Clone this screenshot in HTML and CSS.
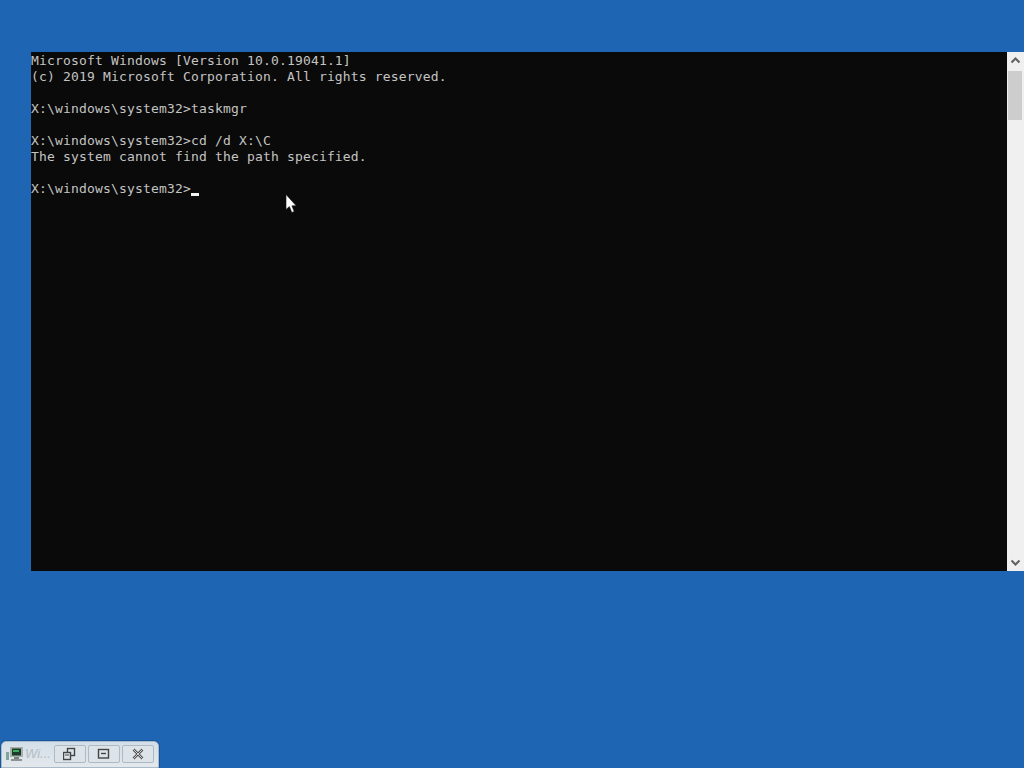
FILE: index.html
```html
<!DOCTYPE html>
<html lang="en">
<head>
<meta charset="utf-8">
<title>Command Prompt</title>
<link rel="stylesheet" href="styles.css">
</head>
<body>
<main class="console">
<pre class="output">Microsoft Windows [Version 10.0.19041.1]
(c) 2019 Microsoft Corporation. All rights reserved.

X:\windows\system32&gt;taskmgr

X:\windows\system32&gt;cd /d X:\C
The system cannot find the path specified.

X:\windows\system32&gt;<span class="caret"></span></pre>
<div class="scrollbar">
<svg class="arrow" width="17" height="17" viewBox="0 0 17 17"><path d="M4.5 10.5 8.5 6.5 12.5 10.5" fill="none" stroke="#606060" stroke-width="2"/></svg>
<div class="track"><div class="thumb"></div></div>
<svg class="arrow" width="17" height="17" viewBox="0 0 17 17"><path d="M4.5 6.5 8.5 10.5 12.5 6.5" fill="none" stroke="#606060" stroke-width="2"/></svg>
</div>
</main>
<svg class="cursor" width="12" height="20" viewBox="0 0 12 20"><path d="M1 0.5V15.5L4.4 12.6 6.8 18.5 9.2 17.5 6.9 11.8H11.2Z" fill="#fff" stroke="#111" stroke-width="0.6"/></svg>
<div class="minimized">
<svg class="app-icon" width="19" height="16" viewBox="1 0 19 16"><rect x="6" y="1" width="13" height="10" fill="#a9b0ac"/><rect x="8" y="2.5" width="9" height="7" fill="#1c3b2a"/><rect x="9" y="4" width="6" height="2" fill="#3fae5c"/><rect x="10" y="11" width="5" height="2" fill="#79817c"/><rect x="7" y="13" width="11" height="2" fill="#8d9490"/><rect x="2" y="6" width="3" height="8" fill="#7fa69a"/></svg>
<span class="min-title">Wi...</span>
<button class="win-btn"><svg width="14" height="14" viewBox="1 0 14 14"><rect x="5.5" y="1.5" width="7" height="7" fill="none" stroke="#444" stroke-width="1.4"/><rect x="1.5" y="5.5" width="7" height="7" fill="#dfe5ea" stroke="#444" stroke-width="1.4"/><path d="M3 8h4" stroke="#444"/></svg></button>
<button class="win-btn"><svg width="14" height="12" viewBox="0 0 14 12"><rect x="1.5" y="1.5" width="10" height="8.5" fill="none" stroke="#444" stroke-width="1.4"/><path d="M4 5.5h5" stroke="#444" stroke-width="1.4"/></svg></button>
<button class="win-btn"><svg width="14" height="12" viewBox="0 0 14 12"><path d="M2.5 1.5 11.5 10.5M11.5 1.5 2.5 10.5" stroke="#555" stroke-width="2.6"/><path d="M2.5 1.5 11.5 10.5M11.5 1.5 2.5 10.5" stroke="#eee" stroke-width="0.8"/></svg></button>
</div>
</body>
</html>
```
FILE: styles.css
```css
html, body {
  margin: 0;
  height: 100%;
  overflow: hidden;
  background: #1e66b4;
}
.console {
  position: absolute;
  left: 31px;
  top: 52px;
  width: 993px;
  height: 519px;
  display: flex;
  background: #0a0a0a;
}
.output {
  flex: 1;
  margin: 0;
  padding-top: 1px;
  font: 13px/16px "DejaVu Sans Mono", monospace;
  letter-spacing: 0.17px;
  color: #c4c4c4;
}
.caret {
  display: inline-block;
  width: 8px;
  height: 3px;
  background: #f2f2f2;
  vertical-align: -3px;
}
.scrollbar {
  width: 17px;
  display: flex;
  flex-direction: column;
  background: #f0f0f0;
}
.arrow { display: block; }
.track { flex: 1; padding: 2px 2px 0 1px; }
.thumb {
  height: 49px;
  background: #cdcdcd;
}
.cursor {
  position: absolute;
  left: 285px;
  top: 194px;
}
.minimized {
  position: absolute;
  left: 1px;
  top: 741px;
  width: 158px;
  height: 27px;
  box-sizing: border-box;
  display: flex;
  align-items: center;
  padding: 0 2px 2px 3px;
  background: linear-gradient(#d3dfe9, #e3e8ec);
  border: 1px solid #a9bac9;
  border-radius: 5px 5px 0 0;
  box-shadow: 0 0 0 1px rgba(10, 50, 100, .3);
}
.app-icon { flex: none; }
.min-title {
  width: 29px;
  margin-left: 1px;
  font: italic 13px "Liberation Sans", sans-serif;
  color: #b6bcc2;
}
.win-btn {
  width: 32px;
  height: 18px;
  margin-right: 2px;
  padding: 0;
  display: flex;
  align-items: center;
  justify-content: center;
  background: #dce3e9;
  border: 1px solid #aeb9c2;
  border-radius: 2px;
}
.win-btn:last-child { margin-right: 0; }
```
